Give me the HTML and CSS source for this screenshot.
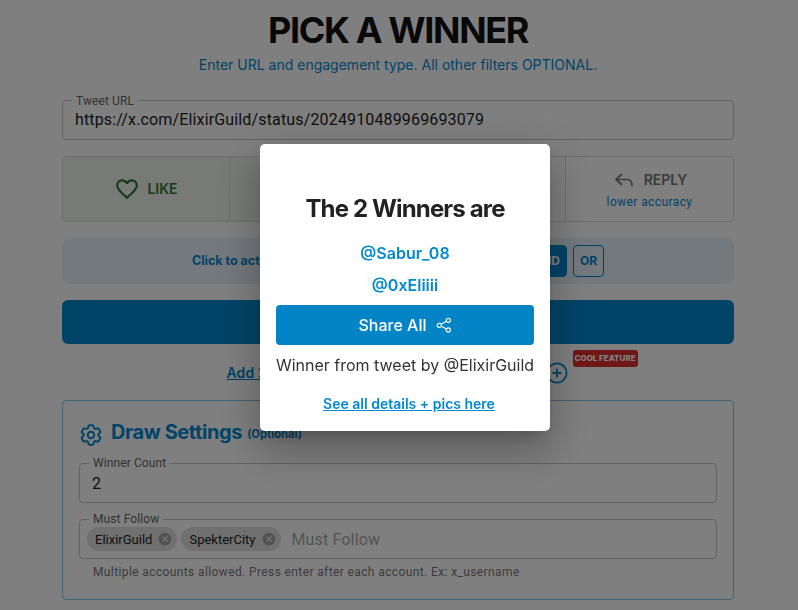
FILE: index.html
```html
<!DOCTYPE html>
<html lang="en">
<head>
<meta charset="utf-8">
<title>Pick a Winner</title>
<link rel="stylesheet" href="styles.css">
</head>
<body>
<main class="page">
  <h1 class="title">PICK A WINNER</h1>
  <p class="subtitle">Enter URL and engagement type. All other filters OPTIONAL.</p>

  <div class="field field-url">
    <span class="field-label">Tweet URL</span>
    <span class="field-value">https://x.com/ElixirGuild/status/2024910489969693079</span>
  </div>

  <div class="engagement">
    <div class="eng-cell eng-active">
      <svg class="heart" viewBox="0 0 24 24" width="26" height="26"><path fill="currentColor" d="M16.5 3c-1.74 0-3.41.81-4.5 2.09C10.91 3.81 9.24 3 7.5 3 4.42 3 2 5.42 2 8.5c0 3.78 3.4 6.86 8.55 11.54L12 21.35l1.45-1.32C18.6 15.36 22 12.28 22 8.5 22 5.42 19.58 3 16.5 3zm-4.4 15.55l-.1.1-.1-.1C7.14 14.24 4 11.39 4 8.5 4 6.5 5.5 5 7.5 5c1.54 0 3.04.99 3.57 2.36h1.87C13.46 5.99 14.96 5 16.5 5c2 0 3.5 1.5 3.5 3.5 0 2.89-3.14 5.74-7.9 10.05z"/></svg>
      <span class="eng-name">LIKE</span>
    </div>
    <div class="eng-cell eng-active"></div>
    <div class="eng-cell"></div>
    <div class="eng-cell eng-stack">
      <div class="eng-line">
        <svg class="reply" viewBox="0 0 24 24" width="24" height="24"><path d="M9.500 6.500L4 11.500l5.500 5M4.500 11.500h10.500c3.500 0 5 2 5 6" fill="none" stroke="currentColor" stroke-width="1.700" stroke-linecap="round" stroke-linejoin="round"/></svg>
        <span class="eng-name">REPLY</span>
      </div>
      <span class="eng-note">lower accuracy</span>
    </div>
  </div>

  <div class="mode-bar">
    <span class="mode-text">Click to activate all combined engagement filters now</span>
    <span class="mode-btn mode-on">AND</span>
    <span class="mode-btn">OR</span>
  </div>

  <div class="primary"></div>

  <div class="add-row">
    <a class="add-link" href="#">Add 2nd tweet and choose winners from both</a>
    <span class="add-wrap">
      <svg class="plus" viewBox="0 0 22 22" width="22" height="22"><circle cx="11" cy="11" r="9.600" fill="none" stroke="currentColor" stroke-width="1.800"/><path d="M11 6.500v9M6.500 11h9" stroke="currentColor" stroke-width="1.800"/></svg>
      <span class="badge">COOL FEATURE</span>
    </span>
  </div>

  <section class="settings">
    <div class="settings-head">
      <svg class="gear" viewBox="0 0 24 24" width="26" height="26"><path d="M9.594 3.940c.09-.542.56-.94 1.110-.94h2.593c.55 0 1.020.398 1.110.94l.213 1.281c.063.374.313.686.645.870.074.04.147.083.22.127.325.196.72.257 1.075.124l1.217-.456a1.125 1.125 0 0 1 1.370.49l1.296 2.247a1.125 1.125 0 0 1-.26 1.431l-1.003.827c-.293.241-.438.613-.43.992a7.723 7.723 0 0 1 0 .255c-.008.378.137.75.43.991l1.004.827c.424.35.534.955.26 1.430l-1.298 2.247a1.125 1.125 0 0 1-1.369.491l-1.217-.456c-.355-.133-.75-.072-1.076.124a6.470 6.470 0 0 1-.22.128c-.331.183-.581.495-.644.869l-.213 1.281c-.09.543-.56.94-1.110.94h-2.594c-.55 0-1.019-.398-1.110-.94l-.213-1.281c-.062-.374-.312-.686-.644-.87a6.520 6.520 0 0 1-.22-.127c-.325-.196-.72-.257-1.076-.124l-1.217.456a1.125 1.125 0 0 1-1.369-.49l-1.297-2.247a1.125 1.125 0 0 1 .26-1.431l1.004-.827c.292-.24.437-.613.43-.991a6.932 6.932 0 0 1 0-.255c.007-.38-.138-.751-.43-.992l-1.004-.827a1.125 1.125 0 0 1-.26-1.430l1.297-2.247a1.125 1.125 0 0 1 1.370-.491l1.216.456c.356.133.751.072 1.076-.124.072-.044.146-.086.22-.128.332-.183.582-.495.644-.869l.214-1.280Z" fill="none" stroke="currentColor" stroke-width="1.800" stroke-linejoin="round"/><path d="M15 12a3 3 0 1 1-6 0 3 3 0 0 1 6 0Z" fill="none" stroke="currentColor" stroke-width="1.800"/></svg>
      <h2 class="settings-title">Draw Settings</h2>
      <span class="settings-opt">(Optional)</span>
    </div>
    <div class="field field-inner">
      <span class="field-label">Winner Count</span>
      <span class="field-value">2</span>
    </div>
    <div class="field field-inner field-chips">
      <span class="field-label">Must Follow</span>
      <span class="chip">ElixirGuild<svg class="chip-x" viewBox="0 0 16 16" width="16" height="16"><circle cx="8" cy="8" r="7"/><path d="M5.300 5.300l5.400 5.400M10.700 5.300l-5.400 5.400"/></svg></span>
      <span class="chip">SpekterCity<svg class="chip-x" viewBox="0 0 16 16" width="16" height="16"><circle cx="8" cy="8" r="7"/><path d="M5.300 5.300l5.400 5.400M10.700 5.300l-5.400 5.400"/></svg></span>
      <span class="placeholder">Must Follow</span>
    </div>
    <p class="helper">Multiple accounts allowed. Press enter after each account. Ex: x_username</p>
  </section>
</main>

<div class="backdrop">
  <div class="modal">
    <h2 class="modal-title">The 2 Winners are</h2>
    <a class="winner" href="#">@Sabur_08</a>
    <a class="winner" href="#">@0xEliiii</a>
    <button class="share" type="button">Share All
      <svg class="share-icon" viewBox="0 0 16 16" width="16" height="16"><circle cx="3.300" cy="8.300" r="2.100"/><circle cx="12.300" cy="3.300" r="2.100"/><circle cx="12.300" cy="13" r="2.100"/><path d="M5.200 7.300l5.200-3M5.200 9.300l5.200 2.800"/></svg>
    </button>
    <p class="from">Winner from tweet by @ElixirGuild</p>
    <a class="details" href="#">See all details + pics here</a>
  </div>
</div>
</body>
</html>
```
FILE: styles.css
```css
* { box-sizing: border-box; }
html, body { margin: 0; height: 100%; overflow: hidden; background: #fff; }
body { font-family: "Roboto", "Liberation Sans", sans-serif; color: #1c1c1c; }

.page { width: 672px; margin: 0 auto 0 62px; display: flex; flex-direction: column; }

.title { margin: 8px 0 0; height: 44px; font: 700 36px/44px "Inter", sans-serif; letter-spacing: -1.35px; text-align: center; color: #111; }
.subtitle { margin: 4px 0 0; height: 18px; font: 400 14px/18px "Inter", sans-serif; text-align: center; color: #0288d1; }

.field { position: relative; height: 40px; border: 1px solid #c4c4c4; border-radius: 4px; display: flex; align-items: center; padding: 0 12px; }
.field-url { margin-top: 26px; }
.field-label { position: absolute; left: 9px; top: -7px; padding: 0 4px; background: #fff; font-size: 12px; line-height: 14px; color: #666; letter-spacing: 0.1px; }
.field-value { font-size: 16px; line-height: 20px; padding-top: 2px; color: #222; letter-spacing: 0.15px; }
.field-url .field-value { padding-top: 0; }

.engagement { margin-top: 16px; height: 66px; border: 1px solid #d8d8d8; border-radius: 4px; display: grid; grid-template-columns: 166px 168px 168px 1fr; overflow: hidden; }
.eng-cell { display: flex; align-items: center; justify-content: center; gap: 7px; border-left: 1px solid #d8d8d8; }
.eng-cell:first-child { border-left: 0; }
.eng-active { background: #eef4ee; color: #2e7d32; }
.eng-stack { flex-direction: column; gap: 1px; padding-top: 1px; }
.eng-line { display: flex; align-items: center; gap: 8px; height: 24px; color: #777; }
.eng-name { font: 600 14px/20px "Inter", sans-serif; }
.eng-note { font-size: 12px; line-height: 18px; letter-spacing: 0.4px; color: #0288d1; }

.mode-bar { margin-top: 16px; height: 46px; border-radius: 8px; background: #e8f2fb; display: flex; align-items: center; justify-content: center; gap: 6px; }
.mode-text { font: 700 12.500px/16px "Inter", sans-serif; color: #0288d1; margin-right: 2px; }
.mode-btn { height: 32px; padding: 0 6px; border: 1px solid #0288d1; border-radius: 4px; display: flex; align-items: center; font: 700 12px/16px "Inter", sans-serif; color: #0288d1; }
.mode-on { background: #0288d1; color: #fff; }

.primary { margin-top: 16px; height: 44px; border-radius: 6px; background: #0288d1; }

.add-row { height: 56px; display: flex; align-items: center; justify-content: center; gap: 5px; padding: 2px 2px 0 0; }
.add-link { font: 600 14px/20px "Inter", sans-serif; letter-spacing: 0.14px; color: #0288d1; white-space: nowrap; }
.add-wrap { position: relative; display: flex; color: #0288d1; }
.badge { position: absolute; left: 27px; top: -12px; white-space: nowrap; height: 17px; padding: 0 2px; border-radius: 3px; background: #e02e2e; color: #fff; font: 800 8px/17px "Inter", sans-serif; }

.settings { height: 200px; border: 1px solid #86c4e8; border-radius: 4px; padding: 22px 16px 0; display: flex; flex-direction: column; }
.settings-head { display: flex; align-items: flex-start; height: 24px; color: #0288d1; }
.gear { margin: -1px 7px 0 -1px; flex: none; }
.settings-title { margin: -3px 0 0; font: 700 20px/24px "Inter", sans-serif; letter-spacing: -0.4px; }
.settings-opt { margin: 4px 0 0 5px; font: 700 11.200px/14px "Inter", sans-serif; }

.field-inner { margin-top: 16px; }
.field-inner .field-label { top: -8px; }
.field-chips { padding: 0 7px; gap: 4px; }
.chip { height: 24px; border-radius: 12px; background: #e0e0e0; display: inline-flex; align-items: center; gap: 5px; padding: 0 4px 0 8px; font-size: 13px; color: #222; }
.chip-x { fill: #a3a3a3; stroke: #e0e0e0; stroke-width: 1.500; }
.placeholder { margin-left: 7px; font-size: 16px; color: #a8a8a8; letter-spacing: 0.15px; }
.helper { margin: 6px 0 0 14px; font-size: 12px; line-height: 14px; letter-spacing: 0.385px; color: #777; }

.backdrop { position: fixed; inset: 0; background: rgba(0, 0, 0, 0.5); }
.modal { position: absolute; left: 260px; top: 144px; width: 290px; height: 287px; background: #fff; border-radius: 5px; padding: 49px 16px 0; display: flex; flex-direction: column; align-items: center; box-shadow: 0 11px 15px -7px rgba(0,0,0,.2), 0 24px 38px 3px rgba(0,0,0,.14), 0 9px 46px 8px rgba(0,0,0,.12); }
.modal-title { margin: 0; height: 32px; font: 700 24px/32px "Inter", sans-serif; letter-spacing: -0.85px; color: #222; }
.winner { margin-top: 12px; height: 20px; font: 600 16px/20px "Inter", sans-serif; color: #0288d1; text-decoration: none; }
.modal-title + .winner { margin-top: 18px; }
.share { margin-top: 10px; width: 100%; height: 40px; border: 0; border-radius: 4px; background: #0284c7; color: #fff; font: 500 16px/20px "Inter", sans-serif; display: flex; align-items: center; justify-content: center; gap: 9px; }
.share-icon { fill: none; stroke: #fff; stroke-width: 1.100; }
.from { margin: 10px 0 0; font: 400 16px/20px "Inter", sans-serif; color: #333; white-space: nowrap; }
.details { margin: 19px 0 0 8px; font: 600 14px/20px "Inter", sans-serif; color: #0288d1; }
```
